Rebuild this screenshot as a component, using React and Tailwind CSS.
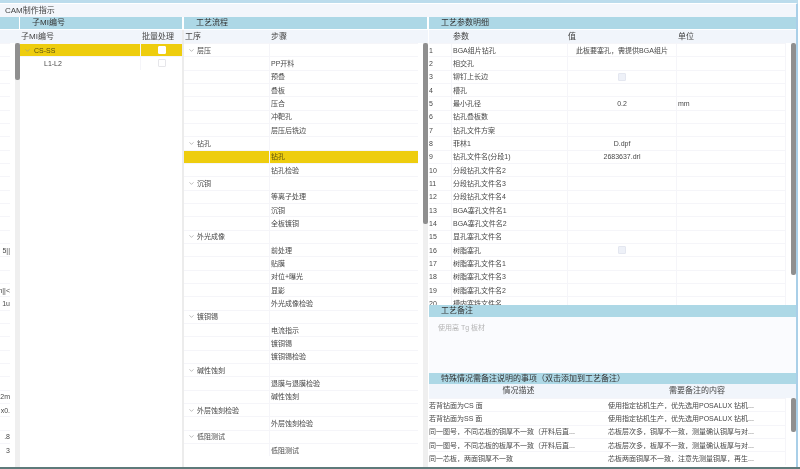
import { ChevronDown } from "lucide-react";

const rowH = "h-[13.33px] border-t border-[#f5f5f9]";
const cellLine = "border-r border-[#f5f5f9]";

const leftRows = { 15: "5||", 18: "n||<", 19: "1u", 26: "2m", 27: "x0.", 29: ".8", 30: "3" };

const flow = [
  ["层压", ["PP开料", "预叠", "叠板", "压合", "冲靶孔", "层压后铣边"]],
  ["钻孔", ["钻孔", "钻孔检验"]],
  ["沉铜", ["等离子处理", "沉铜", "全板镀铜"]],
  ["外光成像", ["前处理", "贴膜", "对位+曝光", "显影", "外光成像检验"]],
  ["镀铜锡", ["电流指示", "镀铜锡", "镀铜锡检验"]],
  ["碱性蚀刻", ["退膜与退膜检验", "碱性蚀刻"]],
  ["外层蚀刻检验", ["外层蚀刻检验"]],
  ["低阻测试", ["低阻测试"]],
];

const params = [
  ["BGA组片钻孔", "此板要塞孔，需提供BGA组片"],
  ["相交孔"],
  ["铆钉上长边", "check"],
  ["槽孔"],
  ["最小孔径", "0.2", "mm"],
  ["钻孔叠板数"],
  ["钻孔文件方案"],
  ["菲林1", "D.dpf"],
  ["钻孔文件名(分段1)", "2683637.drl"],
  ["分段钻孔文件名2"],
  ["分段钻孔文件名3"],
  ["分段钻孔文件名4"],
  ["BGA塞孔文件名1"],
  ["BGA塞孔文件名2"],
  ["显孔塞孔文件名"],
  ["树脂塞孔", "check"],
  ["树脂塞孔文件名1"],
  ["树脂塞孔文件名3"],
  ["树脂塞孔文件名2"],
  ["槽内塞铣文件名"],
];

const notes = [
  ["若背钻面为CS 面", "使用指定钻机生产，优先选用POSALUX 钻机..."],
  ["若背钻面为SS 面", "使用指定钻机生产，优先选用POSALUX 钻机..."],
  ["同一图号，不同芯板的铜厚不一致（开料后直...", "芯板层次多，铜厚不一致，测量确认铜厚与对..."],
  ["同一图号，不同芯板的板厚不一致（开料后直...", "芯板层次多，板厚不一致，测量确认板厚与对..."],
  ["同一芯板，两面铜厚不一致", "芯板两面铜厚不一致，注意先测量铜厚，再生..."],
];

function TitleBar({ children, className = "h-[12px]" }) {
  return (
    <div className={`${className} shrink-0 bg-[#add8e6] pl-[12px] flex items-center text-[8px] leading-none text-[#333]`}>
      {children}
    </div>
  );
}

function Check({ tone }) {
  return <span className={`block w-[8px] h-[8px] rounded-[1px] border ${tone}`} />;
}

function Chevron() {
  return <ChevronDown size={7} strokeWidth={2.2} className="text-[#999] shrink-0" />;
}

export default function App() {
  const rowCount = 31;
  return (
    <div
      className="w-[800px] h-[469px] flex flex-col bg-white overflow-hidden text-[7px] leading-none text-[#484848] blur-[0.3px]"
      style={{ fontFamily: '"Liberation Sans", "Noto Sans CJK SC", sans-serif' }}
    >
      <div className="h-[3px] shrink-0 mr-[2px] bg-[#bcdcec]" />
      <div className="h-[14px] shrink-0 mr-[2px] pl-[5px] flex items-center bg-[#f3f6fb] border-t border-r-2 border-t-white border-r-[#a9cfe8] text-[8px] text-[#444]">
        CAM制作指示
      </div>

      <div className="flex-1 flex min-h-0">
        {/* 左侧被遮挡的面板 */}
        <div className="w-[20px] shrink-0 flex flex-col">
          <div className="h-[12px] bg-[#add8e6] mr-px" />
          <div className="flex-1 flex mt-px min-h-0">
            <div className="flex-1 min-w-0 flex flex-col">
              <div className="h-[13px] bg-[#f1f5fb]" />
              <div className="overflow-hidden flex flex-col">
                {Array.from({ length: rowCount }, (_, i) => (
                  <div key={i} className={`${rowH} shrink-0 mr-[5px] flex items-center justify-end whitespace-nowrap`}>
                    {leftRows[i]}
                  </div>
                ))}
              </div>
            </div>
            <div className="flex flex-col">
              <div className="h-[13px] bg-[#f1f5fb]" />
              <div className="flex-1 w-[5px] bg-[#efefef]">
                <div className="h-[37px] rounded-[2px] bg-[#8f8f8f]" />
              </div>
            </div>
          </div>
        </div>

        {/* 子MI编号 */}
        <div className="w-[162px] shrink-0 flex flex-col">
          <TitleBar>子MI编号</TitleBar>
          <div className="h-[13px] mt-px flex items-center bg-[#f1f5fb] text-[8px] text-[#444]">
            <div className="w-[122px] pl-px">子MI编号</div>
            <div>批量处理</div>
          </div>
          <div className={`${rowH} flex bg-[#eecd0e] text-[#5a500f]`}>
            <div className={`w-[121px] pl-[4px] flex items-center gap-[3px] ${cellLine}`}>
              <Chevron />
              CS-SS
            </div>
            <div className="flex-1 flex items-center justify-center"><Check tone="bg-white border-white" /></div>
          </div>
          <div className={`${rowH} flex`}>
            <div className={`w-[121px] pl-[24px] flex items-center ${cellLine}`}>L1-L2</div>
            <div className="flex-1 flex items-center justify-center"><Check tone="bg-white border-[#e6e6ea]" /></div>
          </div>
        </div>

        <div className="w-[2px] shrink-0 mt-[13px] bg-[#ececec]" />

        {/* 工艺流程 */}
        <div className="w-[244px] shrink-0 flex flex-col">
          <TitleBar className="h-[12px] mr-px">工艺流程</TitleBar>
          <div className="h-[13px] mt-px flex items-center bg-[#f1f5fb] text-[8px] text-[#444]">
            <div className="w-[87px] pl-px">工序</div>
            <div>步骤</div>
          </div>
          <div className="flex-1 flex min-h-0">
            <div className="w-[234px] shrink-0">
              {flow.map(([group, steps]) => (
                <div key={group}>
                  <div className={`${rowH} flex items-center`}>
                    <div className={`w-[86px] shrink-0 h-full pl-[4px] flex items-center gap-[2px] ${cellLine}`}>
                      <Chevron />
                      {group}
                    </div>
                  </div>
                  {steps.map((step) => {
                    const active = group === "钻孔" && step === "钻孔";
                    return (
                      <div key={step} className={`${rowH} flex ${active ? "bg-[#eecd0e] text-[#5a500f]" : ""}`}>
                        <div className={`w-[86px] shrink-0 ${cellLine}`} />
                        <div className="pl-px flex items-center">{step}</div>
                      </div>
                    );
                  })}
                </div>
              ))}
            </div>
            <div className="w-[5px] ml-[5px] shrink-0 bg-[#efefef]">
              <div className="h-[181px] rounded-[2px] bg-[#8f8f8f]" />
            </div>
          </div>
        </div>

        <div className="w-px shrink-0" />

        {/* 工艺参数明细 */}
        <div className="w-[367px] shrink-0 flex flex-col">
          <TitleBar>工艺参数明细</TitleBar>
          <div className="h-[13px] mt-px flex items-center bg-[#f1f5fb] text-[8px] text-[#444]">
            <div className="w-[24px]" />
            <div className="w-[115px]">参数</div>
            <div className="w-[110px]">值</div>
            <div>单位</div>
          </div>
          <div className="h-[262px] shrink-0 flex overflow-hidden">
            <div className="w-[357px] shrink-0">
              {params.map(([name, value, unit], i) => (
                <div key={name} className={`${rowH} flex items-center`}>
                  <div className={`w-[23px] shrink-0 h-full flex items-center mr-px ${cellLine}`}>{i + 1}</div>
                  <div className={`w-[115px] shrink-0 h-full flex items-center ${cellLine}`}>{name}</div>
                  <div className={`w-[109px] shrink-0 h-full flex items-center justify-center ${cellLine}`}>
                    {value === "check" ? <Check tone="bg-[#eef1f8] border-[#e4e7f0]" /> : value}
                  </div>
                  <div className={`flex-1 h-full pl-px flex items-center ${cellLine}`}>{unit}</div>
                </div>
              ))}
            </div>
            <div className="w-[5px] ml-[5px] shrink-0">
              <div className="h-[232px] rounded-[2px] bg-[#8f8f8f]" />
            </div>
          </div>

          <TitleBar>工艺备注</TitleBar>
          <div className="h-[56px] shrink-0 pl-[9px] pt-[7px] bg-[#fafbfe] text-[#b5b5b5]">使用高 Tg 板材</div>

          <TitleBar className="h-[11px]">特殊情况需备注说明的事项（双击添加到工艺备注）</TitleBar>
          <div className="h-[14px] shrink-0 flex items-center bg-[#f1f5fb] text-center text-[8px] text-[#444]">
            <div className="w-[179px]">情况描述</div>
            <div className="w-[178px]">需要备注的内容</div>
          </div>
          <div className="flex">
            <div className="w-[357px] shrink-0">
              {notes.map(([desc, note]) => (
                <div key={desc} className={`${rowH} flex items-center whitespace-nowrap ${cellLine}`}>
                  <div className="w-[179px] shrink-0 overflow-hidden">{desc}</div>
                  <div className="overflow-hidden">{note}</div>
                </div>
              ))}
            </div>
            <div className="w-[5px] ml-[5px] shrink-0">
              <div className="h-[34px] rounded-[2px] bg-[#8f8f8f]" />
            </div>
          </div>
        </div>

        <div className="w-[2px] shrink-0 bg-[#a9cfe8]" />
      </div>

      <div className="h-[2px] shrink-0 bg-[#5e7a7a]" />
    </div>
  );
}
